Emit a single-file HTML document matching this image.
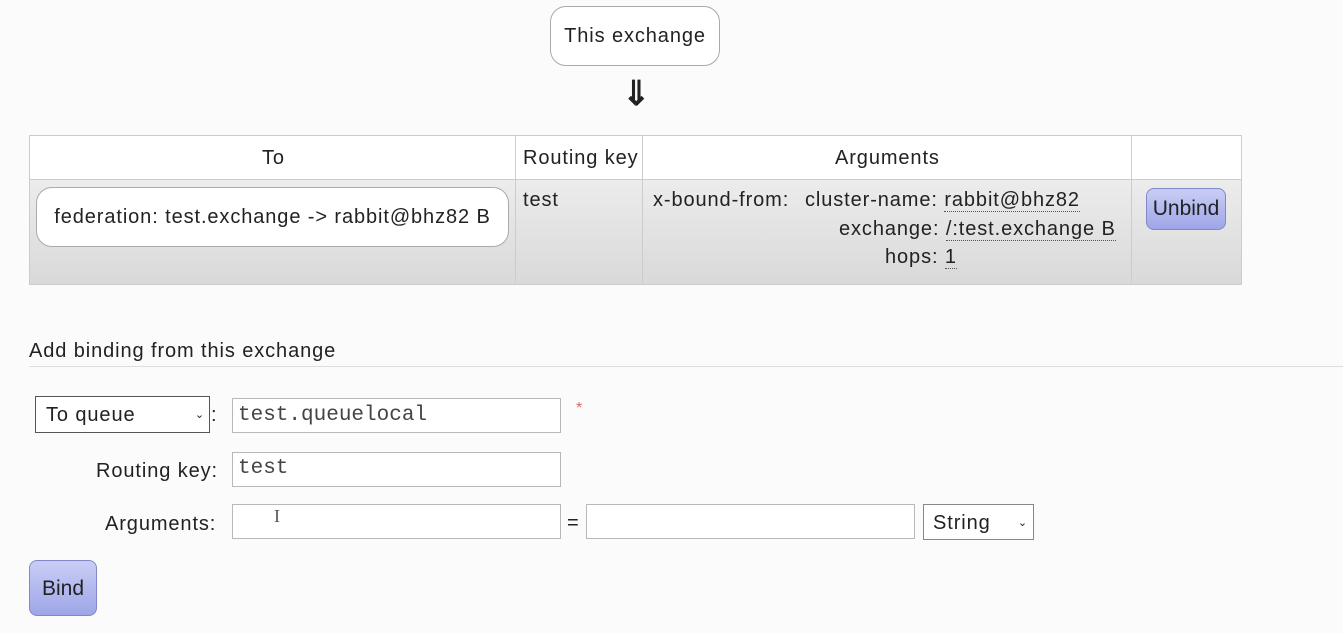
<!DOCTYPE html>
<html><head><meta charset="utf-8"><style>
body{margin:0;width:1343px;height:633px;background:#fbfbfb;font-family:"Liberation Sans",sans-serif;font-size:20px;letter-spacing:0.9px;color:#222;position:relative;overflow:hidden}
.a{position:absolute;white-space:nowrap}
.box{position:absolute;background:#fff;border:1px solid #b8b8b8}
.mono{font-family:"Liberation Mono",monospace;font-size:21px;letter-spacing:0;color:#444}
u{text-decoration:none;border-bottom:1px dotted #555}
.btn{position:absolute;background:linear-gradient(#c9cdf5,#9ea6e8);border:1px solid #8088c8;border-radius:8px;text-align:center;letter-spacing:0}
</style></head><body>
<div class="a" style="left:550px;top:6px;width:168px;height:58px;border:1px solid #aaa;border-radius:16px;background:#fff;text-align:center;line-height:58px">This exchange</div>
<div class="a" style="left:622px;top:74px;font-size:34px;font-weight:bold">⇓</div>

<div class="a" style="left:29px;top:135px;width:1211px;height:148px;border:1px solid #ccc;background:#fff"></div>
<div class="a" style="left:30px;top:179px;width:1211px;height:104px;background:linear-gradient(#ececec,#d9d9d9);border-top:1px solid #ccc"></div>
<div class="a" style="left:515px;top:135px;width:1px;height:148px;background:#ccc"></div>
<div class="a" style="left:642px;top:135px;width:1px;height:148px;background:#ccc"></div>
<div class="a" style="left:1131px;top:135px;width:1px;height:148px;background:#ccc"></div>
<div class="a" style="left:262px;top:147px">To</div>
<div class="a" style="left:523px;top:147px">Routing key</div>
<div class="a" style="left:835px;top:147px">Arguments</div>
<div class="a" style="left:36px;top:187px;width:471px;height:58px;background:#fff;border:1px solid #aaa;border-radius:16px;text-align:center;line-height:58px">federation: test.exchange -&gt; rabbit@bhz82 B</div>
<div class="a" style="left:523px;top:189px">test</div>
<div class="a" style="left:653px;top:189px">x-bound-from:</div>
<div class="a" style="left:805px;top:189px">cluster-name: <u>rabbit@bhz82</u></div>
<div class="a" style="left:839px;top:218px">exchange: <u>/:test.exchange B</u></div>
<div class="a" style="left:885px;top:246px">hops: <u>1</u></div>
<div class="btn" style="left:1146px;top:188px;width:78px;height:40px;line-height:40px;font-size:21px">Unbind</div>

<div class="a" style="left:29px;top:340px">Add binding from this exchange</div>
<div class="a" style="left:29px;top:366px;width:1314px;height:1px;background:#ddd"></div>

<div class="a" style="left:35px;top:396px;width:173px;height:35px;border:1px solid #555;background:#fff;line-height:36px"><span style="margin-left:10px">To queue</span><span style="position:absolute;right:4px;font-size:11px">⌄</span></div>
<div class="a" style="left:211px;top:404px">:</div>
<div class="box mono" style="left:232px;top:398px;line-height:33px;padding-left:5px;box-sizing:border-box;width:329px;height:35px">test.queuelocal</div>
<div class="a" style="left:576px;top:400px;color:#d66;font-size:16px">*</div>
<div class="a" style="left:96px;top:460px">Routing key:</div>
<div class="box mono" style="left:232px;top:452px;width:329px;height:35px;line-height:31px;padding-left:5px;box-sizing:border-box">test</div>
<div class="a" style="left:105px;top:513px">Arguments:</div>
<div class="box" style="left:232px;top:504px;width:329px;height:35px;box-sizing:border-box"></div>
<div class="a" style="left:274px;top:506px;font-size:18px;color:#555;font-family:'Liberation Serif',serif">I</div>
<div class="a" style="left:567px;top:512px">=</div>
<div class="box" style="left:586px;top:504px;width:329px;height:35px;box-sizing:border-box"></div>
<div class="a" style="left:923px;top:504px;width:111px;height:36px;border:1px solid #888;background:#fff;line-height:37px;box-sizing:border-box"><span style="margin-left:9px">String</span><span style="position:absolute;right:5px;font-size:11px">⌄</span></div>
<div class="btn" style="left:29px;top:560px;width:66px;height:54px;line-height:56px;font-size:21px">Bind</div>
</body></html>
